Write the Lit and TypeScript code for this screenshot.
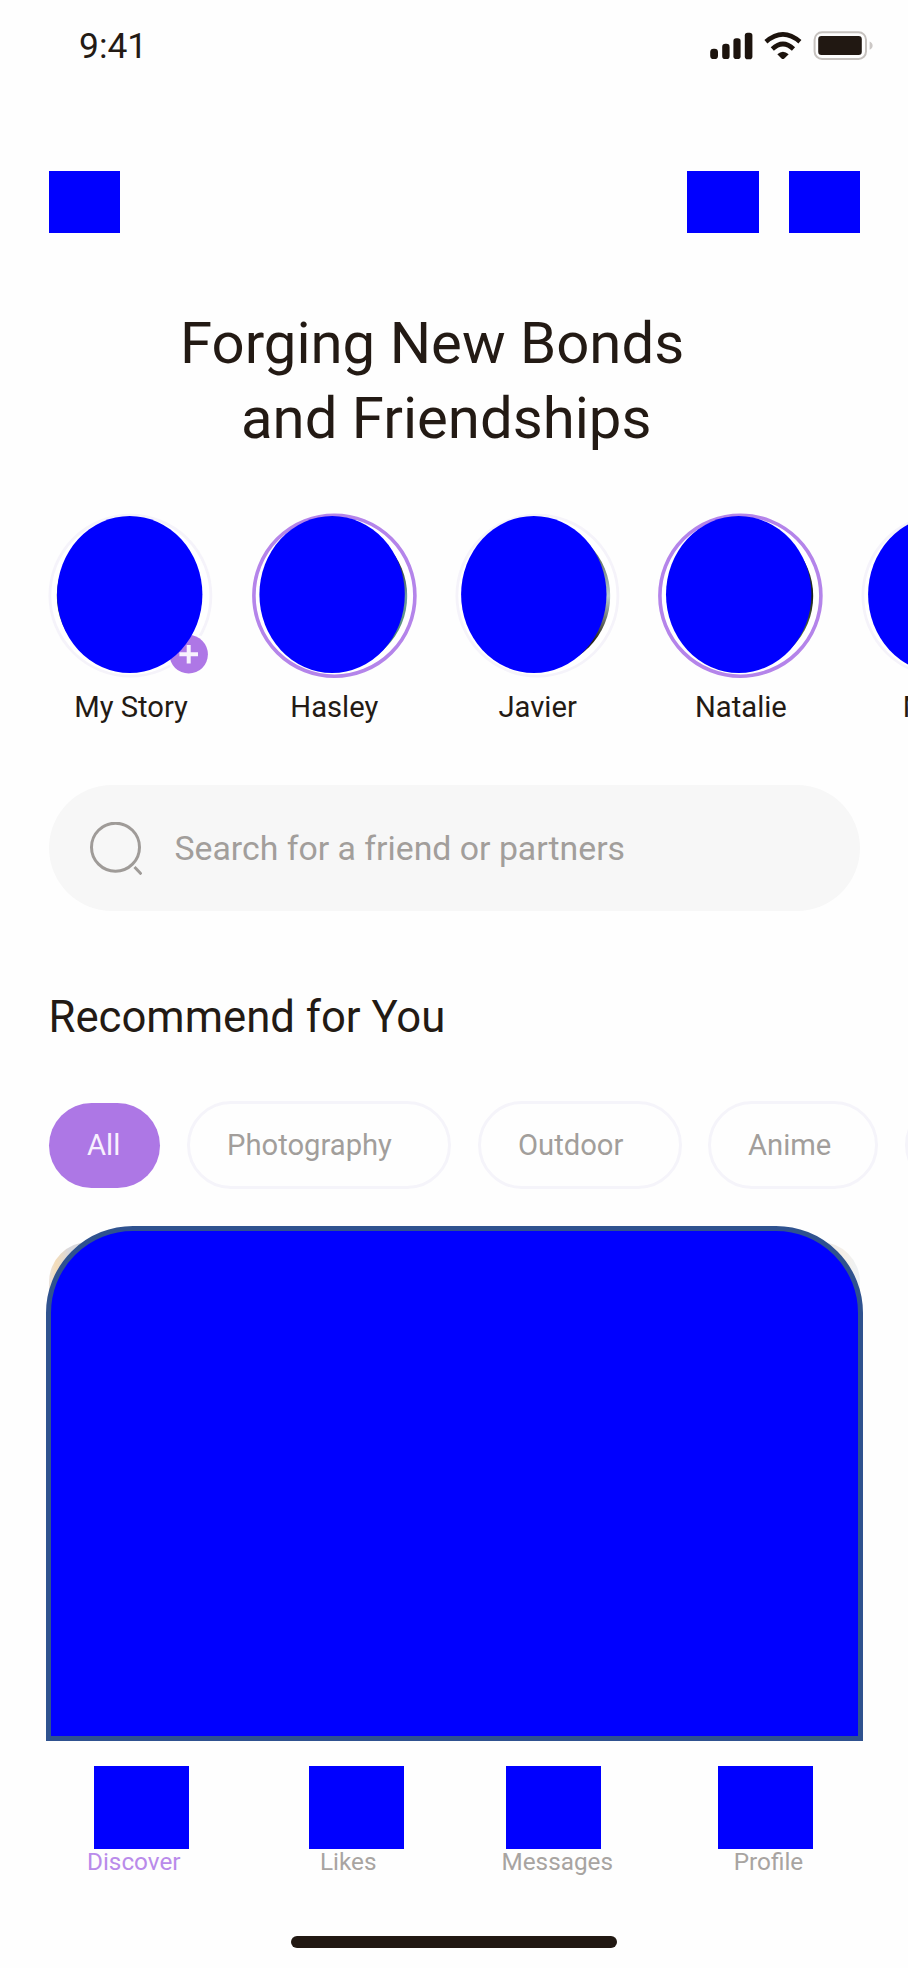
import { LitElement, html, css, svg } from "lit";
import { customElement, property } from "lit/decorators.js";
import { classMap } from "lit/directives/class-map.js";
import { styleMap } from "lit/directives/style-map.js";

interface Story { name: string; active?: boolean; own?: boolean; shade: [string, string, string]; dx: number; }

const STORIES: Story[] = [
  { name: "My Story", own: true, shade: ["#8a9a8a", "#2d4a34", "#6d7d60"], dx: 0 },
  { name: "Hasley", active: true, shade: ["#2c2c20", "#6f9ea0", "#4e8a70"], dx: -1.6 },
  { name: "Javier", shade: ["#66756c", "#b9cccf", "#2b281c"], dx: -2.9 },
  { name: "Natalie", active: true, shade: ["#33402c", "#1d231c", "#5f7d3c"], dx: -1 },
  { name: "Mateo", shade: ["#999999", "#777777", "#555555"], dx: -1.9 },
];

const CHIPS = [
  { label: "All", selected: true, width: 111, gap: 27.5 },
  { label: "Photography", width: 264, gap: 27 },
  { label: "Outdoor", width: 203.5, gap: 26.5 },
  { label: "Anime", width: 169.5, gap: 27.5 },
  { label: "", width: 160, gap: 0 },
];

const TABS = [
  { label: "Discover", active: true, lead: 94, shift: -7 },
  { label: "Likes", lead: 120, shift: 11 },
  { label: "Messages", lead: 102, shift: -4.5 },
  { label: "Profile", lead: 117, shift: 15.8 },
];

@customElement("story-item")
class StoryItem extends LitElement {
  @property({ attribute: false }) story!: Story;

  static styles = css`
    :host { display: flex; flex-direction: column; align-items: center; flex: none; width: 166px; margin-right: 37.3px; }
    .art { display: block; width: 166px; height: 168px; overflow: visible; }
    .name { font-size: 29.2px; line-height: 36px; margin-top: 9px; margin-left: -0.5px; color: #231a14; white-space: nowrap; }
  `;

  render() {
    const s = this.story;
    const [a, b, c] = s.shade;
    return html`
      <svg class="art" viewBox="0 0 166 168">
        <defs>
          <linearGradient id="g" x1="0" y1="0" x2="0" y2="1">
            <stop offset="0.25" stop-color=${a} />
            <stop offset="0.5" stop-color=${b} />
            <stop offset="0.8" stop-color=${c} />
          </linearGradient>
        </defs>
        <circle cx="82.4" cy="83.7" r="80.5" fill="#fff" stroke=${s.active ? "#b484ea" : "#f5f3fa"} stroke-width=${s.active ? 3.6 : 2.8} />
        <circle cx=${s.own ? 81.3 : 82.7} cy="84" r="72.5" fill="url(#g)" />
        ${s.own
          ? svg`<circle cx="140.7" cy="142.3" r="22" fill="#fefefe" />
              <circle cx="140.7" cy="142.3" r="19.2" fill="#ae77e6" />
              <path d="M140.7 133v18.6M131.4 142.3h18.6" stroke="#f8f2fe" stroke-width="4" />`
          : ""}
        <ellipse cx=${81.7 + s.dx} cy="82.5" rx="72.7" ry="78.5" fill="#00f" />
      </svg>
      <span class="name">${s.name}</span>
    `;
  }
}

@customElement("status-bar")
class StatusBar extends LitElement {
  static styles = css`
    :host { display: flex; align-items: center; justify-content: space-between; height: 92px; padding: 0 34.5px 0 79px; }
    .time { font-size: 35.4px; line-height: 40px; color: #231a14; }
    .icons { display: block; width: 165px; height: 30px; }
  `;

  render() {
    return html`
      <span class="time">9:41</span>
      <svg class="icons" viewBox="709 31 165 30">
        <g fill="#1c130d">
          <rect x="710.2" y="48.7" width="7.8" height="10.4" rx="3.4" />
          <rect x="722.2" y="43.8" width="7.4" height="15.3" rx="3.2" />
          <rect x="733.4" y="38.3" width="7.2" height="20.8" rx="2.8" />
          <rect x="744.8" y="32.8" width="7.6" height="26.4" rx="2.8" />
          <path d="M777.3 54.2Q782.9 49.2 788.7 54.2L784.3 58.4Q782.9 59.7 781.5 58.4Z" />
        </g>
        <g fill="none" stroke="#1c130d" stroke-width="4.6">
          <path d="M765.9 41.8Q783 27 799.9 41.8" />
          <path d="M772.3 49Q783 39 793.5 49" />
        </g>
        <rect x="814.6" y="32.2" width="51.4" height="26.8" rx="7.5" fill="none" stroke="#c6c2bf" stroke-width="2" />
        <rect x="818.2" y="36" width="43.6" height="19" rx="3.2" fill="#211812" />
        <path d="M869.6 41.4Q872.6 42.6 872.6 45.6Q872.6 48.6 869.6 49.8Z" fill="#ccc8c6" />
      </svg>
    `;
  }
}

@customElement("app-root")
class AppRoot extends LitElement {
  static styles = css`
    :host { display: block; width: 908px; height: 1968px; overflow: hidden; background: #fefefe; font-family: Roboto, "Liberation Sans", sans-serif; color: #231a14; }
    .toolbar { display: flex; gap: 30px; padding: 79px 48px 0 49px; }
    .tool { width: 71px; height: 62px; background: #00f; }
    .tool.first { margin-right: auto; }
    .tool.wide { width: 72px; }
    .title { margin: 72.5px 0 0; font-size: 58.1px; line-height: 75.5px; font-weight: 400; }
    .line { display: block; white-space: nowrap; padding-left: 180px; }
    .line.second { padding-left: 241px; }
    .stories { display: flex; padding-left: 48.3px; margin-top: 55.5px; }
    .search { display: flex; align-items: center; gap: 33px; width: 811px; height: 126px; box-sizing: border-box; margin: 60px 0 0 48.5px; padding-left: 40px; border-radius: 63px; background: #f7f7f7; }
    .lens { display: block; width: 53px; height: 53px; }
    .hint { font-size: 33.8px; line-height: 40px; padding-top: 2px; color: #a29e9b; }
    .section { margin: 81px 0 0 48.5px; font-size: 43.7px; line-height: 50px; font-weight: 400; }
    .chips { display: flex; padding-left: 48.5px; margin-top: 59px; height: 88px; }
    .chip { flex: none; box-sizing: border-box; height: 88px; border: 3.6px solid #f5f4fa; border-radius: 44px; padding-left: 37px; font-size: 29.2px; line-height: 83px; color: #a29e9b; }
    .chip.selected { height: 85px; margin-top: 2px; border: 0; padding-left: 38.5px; line-height: 85px; background: #ad77e5; color: #f8f1fe; }
    .feed { width: 811px; height: 496px; margin: 53px 0 0 48.5px; border-radius: 40px 40px 0 0; background: linear-gradient(90deg, #e9e2dc 0, #f3dcb8 7px, #d8d8dc 20px, #e6e6e6 770px, #f4efe8 795px, #edf2f6 811px); }
    .cover { position: relative; top: -16px; left: -2.5px; width: 817px; height: 515px; box-sizing: border-box; border: 5px solid #2f528f; border-radius: 87px 87px 0 0; background: #00f; }
    .tabs { display: flex; margin-top: 28px; }
    .tab { width: 95px; }
    .glyph { height: 83px; background: #00f; }
    .caption { font-size: 24.3px; line-height: 25px; white-space: nowrap; color: #a8a4a1; }
    .tab.active .caption { color: #b98bea; }
    .home { width: 326px; height: 12px; margin: 62.3px auto 0 291px; border-radius: 6px; background: #211812; }
  `;

  render() {
    return html`
      <status-bar></status-bar>
      <header class="toolbar">
        <div class="tool first"></div>
        <div class="tool wide"></div>
        <div class="tool"></div>
      </header>
      <h1 class="title"><span class="line">Forging New Bonds</span><span class="line second">and Friendships</span></h1>
      <section class="stories">${STORIES.map((s) => html`<story-item .story=${s}></story-item>`)}</section>
      <div class="search">
        <svg class="lens" viewBox="0 0 53 53" fill="none" stroke="#9f9b98" stroke-width="3">
          <circle cx="26.5" cy="25.2" r="24" />
          <path d="M45.5 45l7 7.3" />
        </svg>
        <span class="hint">Search for a friend or partners</span>
      </div>
      <h2 class="section">Recommend for You</h2>
      <nav class="chips">
        ${CHIPS.map((c) => html`<div class=${classMap({ chip: true, selected: !!c.selected })}
          style=${styleMap({ width: `${c.width}px`, marginRight: `${c.gap}px` })}>${c.label}</div>`)}
      </nav>
      <article class="feed"><div class="cover"></div></article>
      <nav class="tabs">
        ${TABS.map((t) => html`<div class=${classMap({ tab: true, active: !!t.active })} style=${styleMap({ marginLeft: `${t.lead}px` })}>
          <div class="glyph"></div>
          <div class="caption" style=${styleMap({ marginLeft: `${t.shift}px` })}>${t.label}</div>
        </div>`)}
      </nav>
      <div class="home"></div>
    `;
  }
}
